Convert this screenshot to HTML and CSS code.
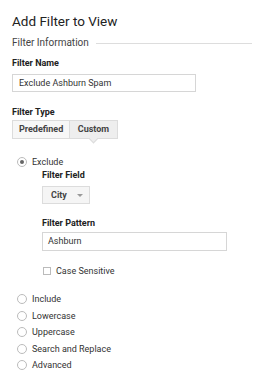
FILE: index.html
```html
<!DOCTYPE html>
<html lang="en">
<head>
    <meta charset="UTF-8">
    <meta name="viewport" content="width=device-width, initial-scale=1.0">
    <title>Add Filter to View</title>
    <link rel="stylesheet" href="styles.css">
</head>
<body>
    <div class="container">
        <h1>Add Filter to View</h1>

        <div class="section-title">
            <span>Filter Information</span>
            <div class="section-line"></div>
        </div>

        <div class="field-label">Filter Name</div>
        <div class="text-input name-input">Exclude Ashburn Spam</div>

        <div class="field-label type-label">Filter Type</div>
        <div class="type-tabs">
            <div class="type-tab">Predefined</div>
            <div class="type-tab active">Custom</div>
        </div>

        <div class="radio-row exclude-row">
            <span class="radio checked"></span>
            <span>Exclude</span>
        </div>

        <div class="sub-options">
            <div class="field-label">Filter Field</div>
            <div class="dropdown">
                <span>City</span>
                <span class="dropdown-arrow"></span>
            </div>

            <div class="field-label pattern-label">Filter Pattern</div>
            <div class="text-input pattern-input">Ashburn</div>

            <div class="checkbox-row">
                <span class="checkbox"></span>
                <span>Case Sensitive</span>
            </div>
        </div>

        <div class="radio-list">
            <div class="radio-row"><span class="radio"></span><span>Include</span></div>
            <div class="radio-row"><span class="radio"></span><span>Lowercase</span></div>
            <div class="radio-row"><span class="radio"></span><span>Uppercase</span></div>
            <div class="radio-row"><span class="radio"></span><span>Search and Replace</span></div>
            <div class="radio-row"><span class="radio"></span><span>Advanced</span></div>
        </div>
    </div>
</body>
</html>
```

FILE: styles.css
```css
body {
    font-family: Roboto, "Liberation Sans", Arial, sans-serif;
    margin: 0;
    background-color: #fff;
    color: #333;
    font-size: 9px;
}
.container {
    padding: 13px 0 0 12px;
}
h1 {
    margin: 0;
    font-size: 13.5px;
    font-weight: normal;
    line-height: 16px;
    color: #222;
}
.section-title {
    display: flex;
    align-items: center;
    margin-top: 8px;
    font-size: 10px;
    line-height: 12px;
    color: #444;
}
.section-line {
    flex: 1;
    height: 1px;
    margin-left: 7px;
    margin-right: 1px;
    margin-top: 1px;
    background-color: #ddd;
}
.field-label {
    font-weight: bold;
    line-height: 12px;
    color: #222;
    margin-top: 8px;
}
.text-input {
    box-sizing: border-box;
    border: 1px solid #d6d6d6;
    background-color: #fff;
    color: #333;
    line-height: 16px;
}
.name-input {
    width: 184px;
    height: 18px;
    margin-top: 5px;
    padding-left: 6px;
}
.type-label {
    margin-top: 14px;
}
.type-tabs {
    display: flex;
    margin-top: 2px;
}
.type-tab {
    box-sizing: border-box;
    height: 19px;
    line-height: 17px;
    padding: 0 6px;
    border: 1px solid #dcdcdc;
    background-color: #f7f7f7;
    font-weight: bold;
    color: #444;
}
.type-tab + .type-tab {
    border-left: none;
}
.type-tab.active {
    position: relative;
    padding: 0 7.5px;
    background-color: #eee;
}
.type-tab.active::after {
    content: "";
    position: absolute;
    left: 20px;
    bottom: -4px;
    width: 6px;
    height: 6px;
    background-color: #eee;
    border-right: 1px solid #dcdcdc;
    border-bottom: 1px solid #dcdcdc;
    transform: rotate(45deg);
}
.radio-row {
    display: flex;
    align-items: center;
    height: 12px;
    line-height: 12px;
    color: #333;
}
.exclude-row {
    margin-top: 17px;
}
.radio {
    box-sizing: border-box;
    width: 10px;
    height: 10px;
    margin-left: 5px;
    margin-right: 5px;
    border: 1px solid #bbb;
    border-radius: 50%;
    background-color: #fff;
    position: relative;
}
.radio.checked::after {
    content: "";
    position: absolute;
    left: 2px;
    top: 2px;
    width: 4px;
    height: 4px;
    border-radius: 50%;
    background-color: #666;
}
.sub-options {
    padding-left: 30px;
}
.sub-options .field-label:first-child {
    margin-top: 1px;
}
.dropdown {
    box-sizing: border-box;
    display: flex;
    align-items: center;
    width: 48px;
    height: 18px;
    margin-top: 5px;
    padding-left: 8px;
    border: 1px solid #dcdcdc;
    background-color: #f5f5f5;
    font-weight: bold;
    color: #444;
}
.dropdown-arrow {
    width: 0;
    height: 0;
    margin-left: 10px;
    margin-top: 1px;
    border-left: 3px solid transparent;
    border-right: 3px solid transparent;
    border-top: 3px solid #999;
}
.pattern-label {
    margin-top: 13px;
}
.pattern-input {
    width: 185px;
    height: 19px;
    margin-top: 3px;
    padding-left: 5px;
    line-height: 17px;
}
.checkbox-row {
    display: flex;
    align-items: center;
    height: 12px;
    margin-top: 14px;
}
.checkbox {
    box-sizing: border-box;
    width: 8px;
    height: 8px;
    margin-left: 1px;
    margin-right: 5px;
    border: 1px solid #bbb;
    background-color: #fff;
}
.radio-list {
    margin-top: 16px;
    display: flex;
    flex-direction: column;
    gap: 4.6px;
}
```
